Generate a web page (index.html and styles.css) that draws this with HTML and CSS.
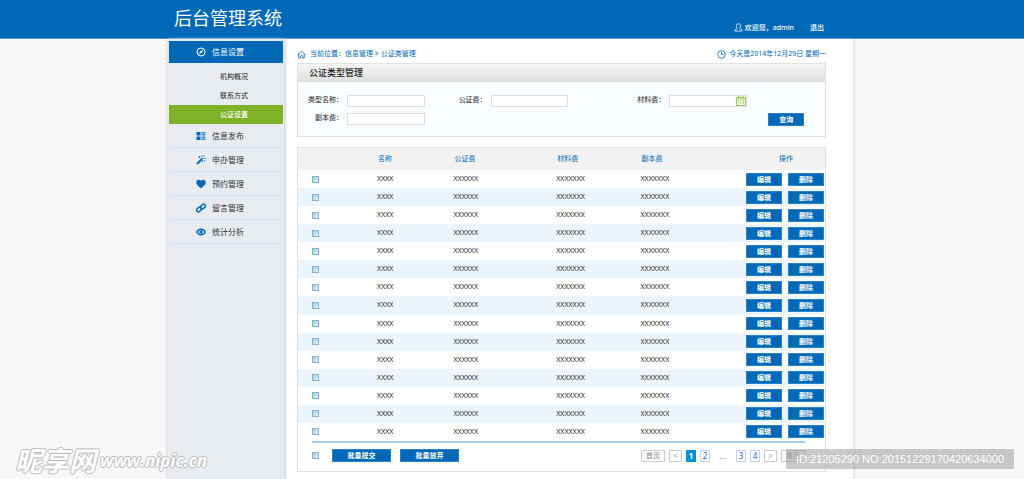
FILE: index.html
```html
<!DOCTYPE html>
<html lang="zh-CN">
<head>
<meta charset="utf-8">
<title>后台管理系统</title>
<link rel="stylesheet" href="styles.css">
</head>
<body>
<header class="topbar">
  <h1 class="brand">后台管理系统</h1>
  <div class="user">
    <svg class="icon-user" viewBox="0 0 18 18" fill="none" stroke="currentColor" stroke-width="1.6"><path d="M6.500 10.500C3.500 7 4.500 1.500 9 1.500s5.500 5.500 2.500 9c0 2 5 1.500 5 5.500h-15c0-4 5-3.500 5-5.500z"/></svg>
    <span>欢迎您，admin</span>
    <a class="logout" href="#">退出</a>
  </div>
</header>
<div class="shell">
  <nav class="sidebar">
    <a class="menu-item menu-open" href="#">
      <svg class="menu-icon" viewBox="0 0 20 20" fill="none" stroke="currentColor" stroke-width="2"><circle cx="10" cy="10" r="8"/><path d="M13.500 6.500 11 11l-4.500 2.500L9 9z" fill="currentColor" stroke-width="1"/></svg>信息设置</a>
    <div class="submenu">
      <a class="sub-item" href="#">机构概况</a>
      <a class="sub-item" href="#">联系方式</a>
      <a class="sub-item sub-active" href="#">公证设置</a>
    </div>
    <a class="menu-item" href="#">
      <svg class="menu-icon" viewBox="0 0 20 20" fill="currentColor"><path d="M1 2h8v7H1zM1 11h8v7H1z"/><path d="M11 2h8v3h-8zM11 6h8v3h-8zM11 11h8v3h-8zM11 15h8v3h-8z" opacity=".75"/></svg>信息发布</a>
    <a class="menu-item" href="#">
      <svg class="menu-icon" viewBox="0 0 20 20" fill="none" stroke="currentColor"><path d="M2 18 12 8" stroke-width="3.800"/><path d="m12 8 2-2" stroke-width="2.800"/><path d="M7 2v4M5 4h4M12 0v3M17 1l-2 2.500M17 7h3M16 10l2 3M13 11v3" stroke-width="1.700"/></svg>申办管理</a>
    <a class="menu-item" href="#">
      <svg class="menu-icon" viewBox="0 0 20 20" fill="currentColor"><path d="M10 18.500C4 14 .5 11 .5 6.500c0-5 6.500-6.500 9.500-2.500 3-4 9.500-2.500 9.500 2.500 0 4.500-3.500 7.500-9.500 12z"/></svg>预约管理</a>
    <a class="menu-item" href="#">
      <svg class="menu-icon" viewBox="0 0 20 20" fill="none" stroke="currentColor" stroke-width="3"><rect x="8.500" y="3.500" width="11" height="7" rx="3.500" transform="rotate(-42 14 7)"/><rect x=".5" y="9.500" width="11" height="7" rx="3.500" transform="rotate(-42 6 13)"/></svg>留言管理</a>
    <a class="menu-item" href="#">
      <svg class="menu-icon" viewBox="0 0 20 20" fill="none" stroke="currentColor"><path d="M1.500 10C5 2.800 15 2.800 18.500 10 15 17.200 5 17.200 1.500 10z" stroke-width="2.800"/><circle cx="10" cy="10" r="2" stroke-width="3"/></svg>统计分析</a>
  </nav>
  <main class="content">
    <div class="crumbs">
      <svg class="crumb-icon" viewBox="0 0 20 20" fill="none" stroke="currentColor" stroke-width="1.800"><path d="M1 11 10 3l9 8M4 9v9h4v-4c0-3 4-3 4 0v4h4V9"/></svg>
      <span>当前位置：信息管理 &gt; 公证类管理</span>
      <span class="today">
        <svg class="crumb-icon" viewBox="0 0 20 20" fill="none" stroke="currentColor" stroke-width="1.800"><circle cx="10" cy="10" r="8.500"/><path d="M10 4.500V10h5"/></svg>
        今天是2014年12月29日 星期一</span>
    </div>
    <section class="panel">
      <h2 class="panel-title">公证类型管理</h2>
      <form class="filters">
        <label for="type">类型名称：</label><input class="field" id="type" type="text">
        <label for="notary">公证费：</label><input class="field" id="notary" type="text">
        <label for="material">材料费：</label>
        <div class="date-field">
          <input class="field" id="material" type="text">
          <svg class="calendar" viewBox="0 0 20 20" fill="none" stroke="currentColor" stroke-width="1.500"><path d="M1 3h18v16H1zM5 0v4M10 0v4M15 0v4M1 6h18"/><path d="M4.500 9.500h11M4.500 12.500h11M4.500 15.500h11" stroke-width="1.800" stroke-dasharray="2 2.500"/></svg>
        </div>
        <label class="copy-label" for="copy">副本费：</label><input class="field copy-field" id="copy" type="text">
        <button class="btn search" type="button">查询</button>
      </form>
    </section>
    <section class="listing">
      <table class="grid">
        <colgroup><col class="c-check"><col class="c-name"><col class="c-fee"><col class="c-material"><col class="c-copy"><col class="c-ops"></colgroup>
        <thead><tr><th></th><th>名称</th><th>公证费</th><th>材料费</th><th>副本费</th><th class="ops-head">操作</th></tr></thead>
        <tbody id="rows"></tbody>
      </table>
      <div class="list-foot">
        <input class="check" type="checkbox" aria-label="全选">
        <button class="btn bulk" type="button">批量提交</button>
        <button class="btn bulk" type="button">批量放弃</button>
        <nav class="pager">
          <a class="page page-end" href="#">首页</a>
          <a class="page page-arrow" href="#">&lt;</a>
          <a class="page page-current" href="#">1</a>
          <a class="page" href="#">2</a>
          <span class="dots">...</span>
          <a class="page" href="#">3</a>
          <a class="page" href="#">4</a>
          <a class="page page-arrow" href="#">&gt;</a>
          <a class="page page-end" href="#">尾页</a>
        </nav>
      </div>
    </section>
  </main>
</div>
<div class="site-mark"><span class="mark-name">昵享网</span><span class="mark-url">www.nipic.cn</span></div>
<div class="image-id">ID:21205290 NO:20151229170420634000</div>
<script src="rows.js"></script>
</body>
</html>
```
FILE: styles.css
```css
* { box-sizing: border-box; }
body {
  margin: 0;
  min-height: 100vh;
  display: flex;
  flex-direction: column;
  background: #f8f8f8;
  color: #222;
  font: 7px/10px "Noto Sans", "Noto Sans CJK SC", sans-serif;
}
a { color: inherit; text-decoration: none; }
button, input { font: inherit; margin: 0; padding: 0; }

.topbar {
  display: flex;
  justify-content: space-between;
  height: 39px;
  padding: 0 200px 0 174px;
  background: #0069b7;
  border-bottom: 1px solid #4b96cd;
  color: #fff;
}
.brand { margin: 0; font-size: 18px; line-height: 36px; font-weight: 400; }
.user { display: flex; align-items: center; gap: 2px; padding-top: 17px; font-weight: 500; }
.icon-user { width: 9px; height: 9px; }
.logout { margin-left: 14px; }

.shell {
  flex: 1;
  display: flex;
  margin: 0 171px 0 168px;
  background: #fff;
  box-shadow: 0 2px 4px #ccc;
}
.sidebar {
  width: 117px;
  padding: 2px 1px 0;
  background: #e8ecf0;
  border-right: 1px solid #d8dce0;
  box-shadow: 1px 0 2px #ddd;
}
.menu-item {
  display: flex;
  align-items: center;
  gap: 6px;
  padding: 0 27px;
  border-bottom: 1px solid #d3e0f0;
  font-size: 8px;
  line-height: 23px;
  color: #333;
}
.menu-icon { width: 10px; height: 10px; color: #0069b7; }
.menu-open { background: #0069b7; border: 0; line-height: 22px; color: #fff; }
.menu-open .menu-icon { color: #fff; }
.submenu { padding-top: 4px; text-align: center; }
.sub-item { display: block; padding-left: 16px; line-height: 19px; }
.sub-active { background: #80b229; color: #fff; font-weight: 500; }

.content { flex: 1; padding: 10px 27px 7px 12px; }
.crumbs { display: flex; align-items: center; gap: 4px; height: 10px; color: #0069b7; }
.crumb-icon { width: 9px; height: 9px; }
.today { display: flex; align-items: center; gap: 3px; margin-left: auto; }

.panel { margin-top: 4px; border: 1px solid #e2e2e2; background: #f9fdff; }
.panel-title {
  margin: 0;
  padding-left: 11px;
  font-size: 9px;
  line-height: 18px;
  font-weight: 500;
  background: linear-gradient(#f6f6f6, #dfdfdf);
}
.filters {
  display: grid;
  grid-template-columns: 49fr 78fr 66fr 78fr 101fr 78fr 78fr;
  grid-auto-rows: 12px;
  row-gap: 6px;
  padding: 13px 0 11px;
}
.filters label { text-align: right; padding-right: 4px; line-height: 10px; }
.copy-label { grid-row: 2; grid-column: 1; }
.copy-field { grid-row: 2; grid-column: 2; }
.field { display: block; width: 100%; height: 12px; border: 1px solid #ddd; background: #fff; }
.date-field { position: relative; }
.calendar { position: absolute; right: 1px; top: 1px; width: 10px; height: 10px; color: #80b229; }
.btn {
  display: block;
  height: 13px;
  border: 1px solid #2a85c8;
  background: #0069b7;
  color: #fff;
  font-weight: 700;
  line-height: 11px;
}
.search { grid-row: 2; grid-column: 7; width: 36px; margin-left: 21px; }

.listing { margin-top: 10px; border: 1px solid #e2e2e2; }
.grid { width: 100%; height: 293px; table-layout: fixed; border-collapse: collapse; }
.c-check { width: 15%; }
.c-name { width: 14.500%; }
.c-fee { width: 19.500%; }
.c-material { width: 16%; }
.c-copy { width: 20%; }
.c-ops { width: 15%; }
.grid th { height: 22px; padding: 0 0 0 1px; background: #f2f2f2; color: #0069b7; font-weight: 400; text-align: left; }
.grid .ops-head { text-align: center; }
.grid td { padding: 0; }
.grid td:first-child { padding-left: 14px; }
.grid tbody tr:nth-child(even) { background: #edf6ff; }
.ops { display: flex; gap: 6px; }
.ops .btn { width: 36px; }
.check {
  appearance: none;
  display: block;
  width: 7px;
  height: 7px;
  border: 1px solid #83b4cf;
  background: linear-gradient(135deg, #9bcfea, #e4f5fd);
}

.list-foot {
  display: flex;
  align-items: center;
  gap: 9px;
  margin: 0 20px 0 14px;
  border-top: 2px solid #a9cce8;
  padding: 6px 0 9px;
}
.list-foot .check { margin-right: 4px; }
.bulk { width: 59px; }
.pager { display: flex; align-items: center; gap: 4px; margin-left: auto; color: #999; }
.page {
  min-width: 10px;
  height: 12px;
  border: 1px solid #ccccf8;
  color: #1a66c0;
  font-size: 8px;
  line-height: 10px;
  text-align: center;
}
.page-end { width: 24px; border-color: #ccc; color: #888; font-size: 7px; }
.page-arrow { width: 13px; border-color: #ccc; color: #aaa; }
.page-current { border-color: #0090dd; background: #0090dd; color: #fff; font-weight: 700; }
.dots { width: 18px; font-size: 9px; text-align: center; }

.site-mark {
  position: absolute;
  left: 15px;
  bottom: 4px;
  display: flex;
  align-items: center;
  gap: 4px;
  color: #fff;
  font-style: italic;
  font-weight: 700;
  text-shadow: 1px 0 #bbb, -1px 0 #bbb, 0 1px #bbb, 0 -1px #bbb;
}
.mark-name { font-size: 27px; line-height: 28px; }
.mark-url { font-family: "Open Sans", sans-serif; font-size: 17px; line-height: 28px; }
.image-id {
  position: absolute;
  right: 10px;
  bottom: 10px;
  padding: 0 10px;
  background: rgba(150, 150, 150, .5);
  color: #fff;
  font-family: "Liberation Sans", sans-serif;
  font-size: 11px;
  line-height: 20px;
}
```
FILE: rows.js
```js
const cells = ["XXXX", "XXXXXX", "XXXXXXX", "XXXXXXX"];
const row =
  '<tr><td><input class="check" type="checkbox" aria-label="选择"></td>' +
  cells.map((text) => `<td>${text}</td>`).join("") +
  '<td><div class="ops"><button class="btn" type="button">编辑</button>' +
  '<button class="btn" type="button">删除</button></div></td></tr>';
document.getElementById("rows").innerHTML = row.repeat(15);
```
